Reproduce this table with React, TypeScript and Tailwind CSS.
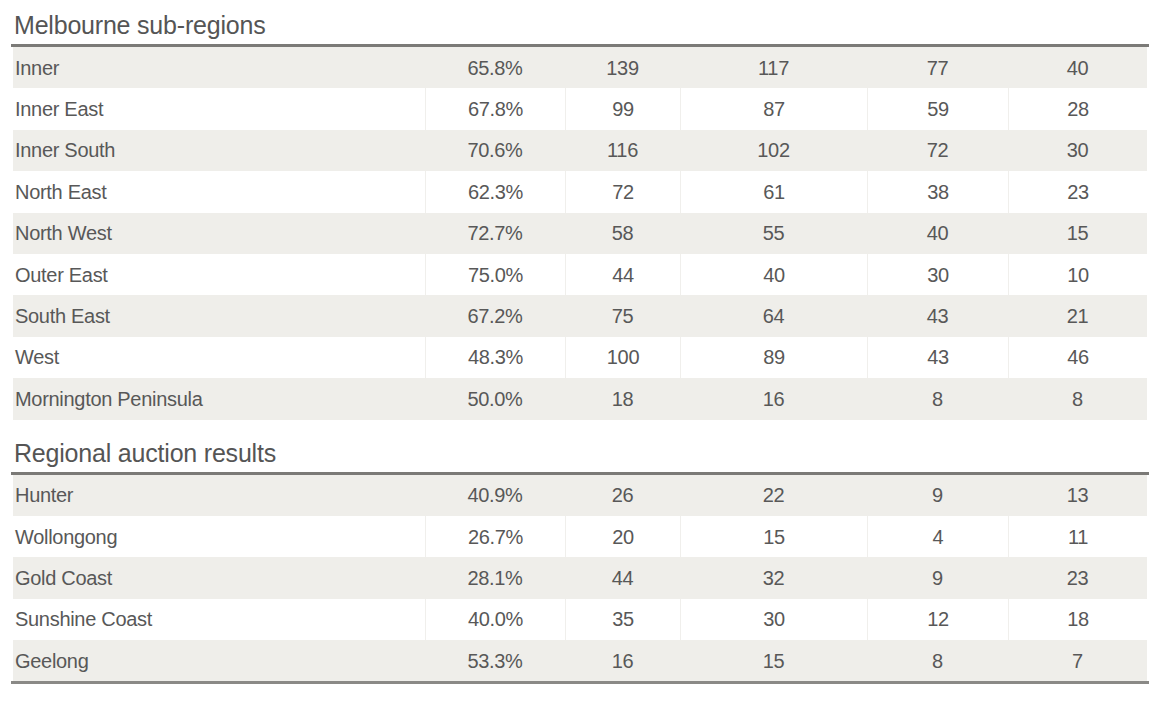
/**
 * Auction results by sub-region — static table.
 */

type Row = [string, string, number, number, number, number]

const melbourne: Row[] = [
  ['Inner', '65.8%', 139, 117, 77, 40],
  ['Inner East', '67.8%', 99, 87, 59, 28],
  ['Inner South', '70.6%', 116, 102, 72, 30],
  ['North East', '62.3%', 72, 61, 38, 23],
  ['North West', '72.7%', 58, 55, 40, 15],
  ['Outer East', '75.0%', 44, 40, 30, 10],
  ['South East', '67.2%', 75, 64, 43, 21],
  ['West', '48.3%', 100, 89, 43, 46],
  ['Mornington Peninsula', '50.0%', 18, 16, 8, 8],
]

const regional: Row[] = [
  ['Hunter', '40.9%', 26, 22, 9, 13],
  ['Wollongong', '26.7%', 20, 15, 4, 11],
  ['Gold Coast', '28.1%', 44, 32, 9, 23],
  ['Sunshine Coast', '40.0%', 35, 30, 12, 18],
  ['Geelong', '53.3%', 16, 15, 8, 7],
]

export default function App() {
  return (
    <div
      className="w-[1160px] h-[704px] bg-white px-[11px] text-[#585858]"
      style={{ fontFamily: '"Liberation Sans", Arial, sans-serif' }}
    >
      <Section title="Melbourne sub-regions" rows={melbourne} titleHeight="h-[44px]" />
      <Section title="Regional auction results" rows={regional} titleHeight="h-[52px]" bottomRule />
    </div>
  )
}

// ── Sub-components ────────────────────────────────────────────────────────────

function Section({
  title, rows, titleHeight, bottomRule,
}: {
  title:        string
  rows:         Row[]
  titleHeight:  string
  bottomRule?:  boolean
}) {
  return (
    <section>
      <div className={`${titleHeight} flex items-end pl-[3px] pb-[6px]`}>
        <h2 className="text-[25px] leading-none text-[#555] tracking-[-0.2px]">{title}</h2>
      </div>
      <div className="h-[3px] bg-[#7b7a77]" />
      {rows.map((r, i) => (
        <TableRow key={r[0]} row={r} shaded={i % 2 === 0} />
      ))}
      {bottomRule && <div className="h-[3px] bg-[#8a8986]" />}
    </section>
  )
}

function TableRow({ row, shaded }: { row: Row; shaded: boolean }) {
  const [name, pct, a, b, c, d] = row
  const cell = shaded ? 'bg-[#efeeea]' : 'bg-white'
  return (
    <div className="grid grid-cols-[414px_140px_115px_187px_141px_139px] h-[41.4px] items-stretch text-[20px] tracking-[-0.3px] bg-white">
      <div className={`${cell} flex items-center ${shaded ? 'ml-[2px] pl-[2px]' : 'pl-[4px]'}`}>
        {name}
      </div>
      {[pct, a, b, c, d].map((v, j) => (
        <div
          key={j}
          className={`${cell} flex items-center justify-center ${
            shaded ? '' : 'border-l border-[#f0efec]'
          }`}
        >
          {v}
        </div>
      ))}
    </div>
  )
}
